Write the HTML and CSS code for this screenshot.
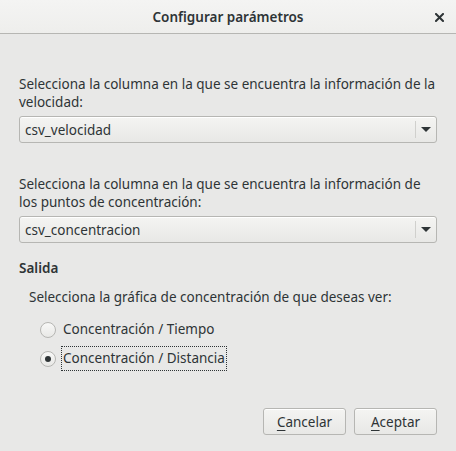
FILE: index.html
```html
<!DOCTYPE html>
<html lang="es">
<head>
<meta charset="utf-8">
<title>Configurar parámetros</title>
<link rel="stylesheet" href="styles.css">
</head>
<body>
<div class="dialog">
  <header class="titlebar">
    <span class="title">Configurar parámetros</span>
    <span class="close" aria-label="Cerrar">
      <svg width="9" height="9" viewBox="0 0 9 9"><path d="M1 1L8 8M8 1L1 8" stroke="#2e3436" stroke-width="2" stroke-linecap="square"/></svg>
    </span>
  </header>
  <main class="content">
    <div class="field first">
      <p class="label">Selecciona la columna en la que se encuentra la información de la velocidad:</p>
      <div class="combo"><span class="combo-text">csv_velocidad</span><span class="combo-arrow"><span class="tri"></span></span></div>
    </div>
    <div class="field">
      <p class="label">Selecciona la columna en la que se encuentra la información de los puntos de concentración:</p>
      <div class="combo"><span class="combo-text">csv_concentracion</span><span class="combo-arrow"><span class="tri"></span></span></div>
    </div>
    <h2 class="section">Salida</h2>
    <p class="sublabel">Selecciona la gráfica de concentración de que deseas ver:</p>
    <div class="radios">
      <label class="radio"><span class="circle"></span><span class="rtext">Concentración / Tiempo</span></label>
      <label class="radio checked"><span class="circle"><span class="dot"></span></span><span class="rtext focus">Concentración / Distancia</span></label>
    </div>
    <div class="actions">
      <button class="btn"><u>C</u>ancelar</button>
      <button class="btn"><u>A</u>ceptar</button>
    </div>
  </main>
</div>
</body>
</html>
```
FILE: styles.css
```css
* { box-sizing: border-box; }
html, body { margin: 0; padding: 0; }
body {
  width: 456px;
  height: 451px;
  font-family: "Noto Sans", "DejaVu Sans", sans-serif;
  font-size: 13.5px;
  color: #2e3436;
  background: #e8e8e7;
}
.dialog { width: 456px; height: 451px; display: flex; flex-direction: column; }
.titlebar {
  height: 34px;
  flex: none;
  background: linear-gradient(#f4f4f3, #eeeeec);
  border-bottom: 1px solid #b6b6b3;
  display: flex;
  align-items: center;
  justify-content: center;
  position: relative;
}
.title { font-weight: 600; font-size: 13.5px; }
.close { position: absolute; right: 12px; top: 13px; width: 9px; height: 9px; display: flex; }
.content { padding: 41px 19px 0 19px; display: flex; flex-direction: column; flex: 1; }
.field { display: flex; flex-direction: column; margin-bottom: 16px; }
.field.first { margin-bottom: 32px; }
.label { margin: 0 0 5px 0; line-height: 18px; }
.combo {
  height: 27px;
  border: 1px solid #b6b6b3;
  border-radius: 3px;
  background: linear-gradient(#f4f4f2, #e8e8e6);
  display: flex;
  align-items: center;
  box-shadow: inset 0 1px #fff;
}
.combo-text { flex: 1; padding-left: 5px; }
.combo-arrow { width: 21px; height: 17px; border-left: 1px solid #d0d0cd; display: flex; align-items: center; justify-content: center; }
.tri { width: 0; height: 0; border-left: 5px solid transparent; border-right: 5px solid transparent; border-top: 5px solid #2e3436; }
.section { margin: 0; font-size: 13.5px; font-weight: 600; line-height: 18px; }
.sublabel { margin: 11px 0 0 10px; line-height: 18px; }
.radios { display: flex; flex-direction: column; gap: 6px; margin: 12px 0 0 21px; }
.radio { display: flex; align-items: center; gap: 6px; height: 23px; }
.circle {
  width: 16px; height: 16px; border-radius: 50%;
  border: 1px solid #b6b6b3;
  background: linear-gradient(#f8f8f7, #e8e8e6);
  display: flex; align-items: center; justify-content: center;
}
.dot { width: 6px; height: 6px; border-radius: 50%; background: #2e3436; }
.rtext { padding: 0 1px; line-height: 23px; }
.focus { outline: 1px dotted #2e3436; outline-offset: 0; }
.actions { margin-top: auto; margin-bottom: 16px; display: flex; justify-content: flex-end; gap: 8px; }
.btn {
  font: inherit; color: #2e3436;
  width: 83px; height: 27px;
  border: 1px solid #b6b6b3; border-radius: 3px;
  background: linear-gradient(#f4f4f2, #e8e8e6);
  box-shadow: inset 0 1px #fff;
  padding: 0;
}
.btn u { text-decoration-thickness: 1px; text-underline-offset: 3px; }
```
